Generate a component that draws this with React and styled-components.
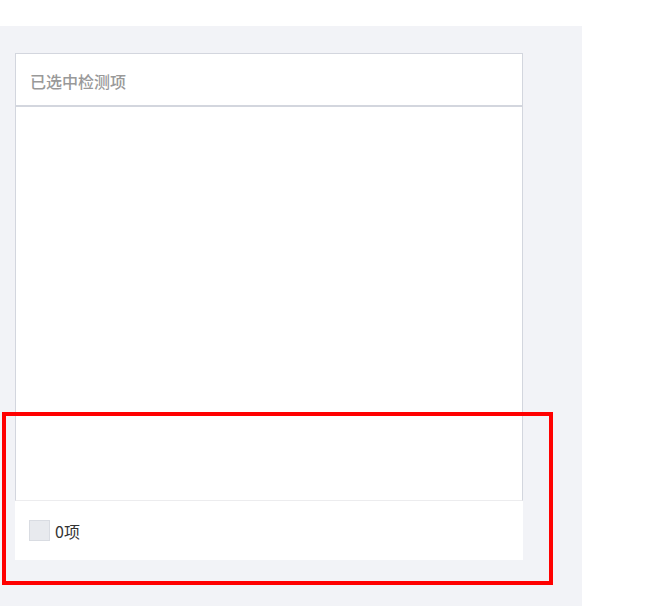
import styled, { createGlobalStyle } from "styled-components"

const Global = createGlobalStyle`
  html, body {
    margin: 0;
    padding: 0;
    background: #fff;
    font-family: "Noto Sans CJK SC", "Noto Sans", "Liberation Sans", sans-serif;
  }
`

const Page = styled.div`
  padding-top: 26px;
  position: relative;
`

const Panel = styled.div`
  width: 582px;
  height: 580px;
  box-sizing: border-box;
  background: #f2f3f7;
  padding: 27px 0 0 15px;
`

const Card = styled.div`
  width: 508px;
  display: flex;
  flex-direction: column;
`

const Header = styled.div`
  height: 51px;
  box-sizing: border-box;
  border: 1px solid #d3d6de;
  border-bottom: 2px solid #d3d6de;
  background: #fff;
  display: flex;
  align-items: center;
  padding: 3px 0 0 14px;
  height: 54px;
  font-size: 16px;
  font-weight: 500;
  color: #999;
`

const List = styled.div`
  height: 393px;
  background: #fff;
  border-left: 1px solid #d3d6de;
  border-right: 1px solid #d3d6de;
  border-bottom: 1px solid #ececee;
`

const Footer = styled.div`
  height: 59px;
  background: #fff;
  display: flex;
  align-items: center;
  padding-left: 14px;
  gap: 5px;
  font-size: 16px;
  color: #333;
`

const Check = styled.span`
  width: 19px;
  height: 19px;
  border: 1px solid #d9dce2;
  background: #e8eaee;
  display: inline-block;
`

const Highlight = styled.div`
  position: absolute;
  left: 2px;
  top: 412px;
  width: 551px;
  height: 173px;
  box-sizing: border-box;
  border: 4px solid #ff0000;
  pointer-events: none;
`

const App = () => {
  return (
    <Page>
      <Global />
      <Panel>
        <Card>
          <Header>已选中检测项</Header>
          <List />
          <Footer>
            <Check />
            <span>0项</span>
          </Footer>
        </Card>
      </Panel>
      <Highlight />
    </Page>
  )
}

export default App
